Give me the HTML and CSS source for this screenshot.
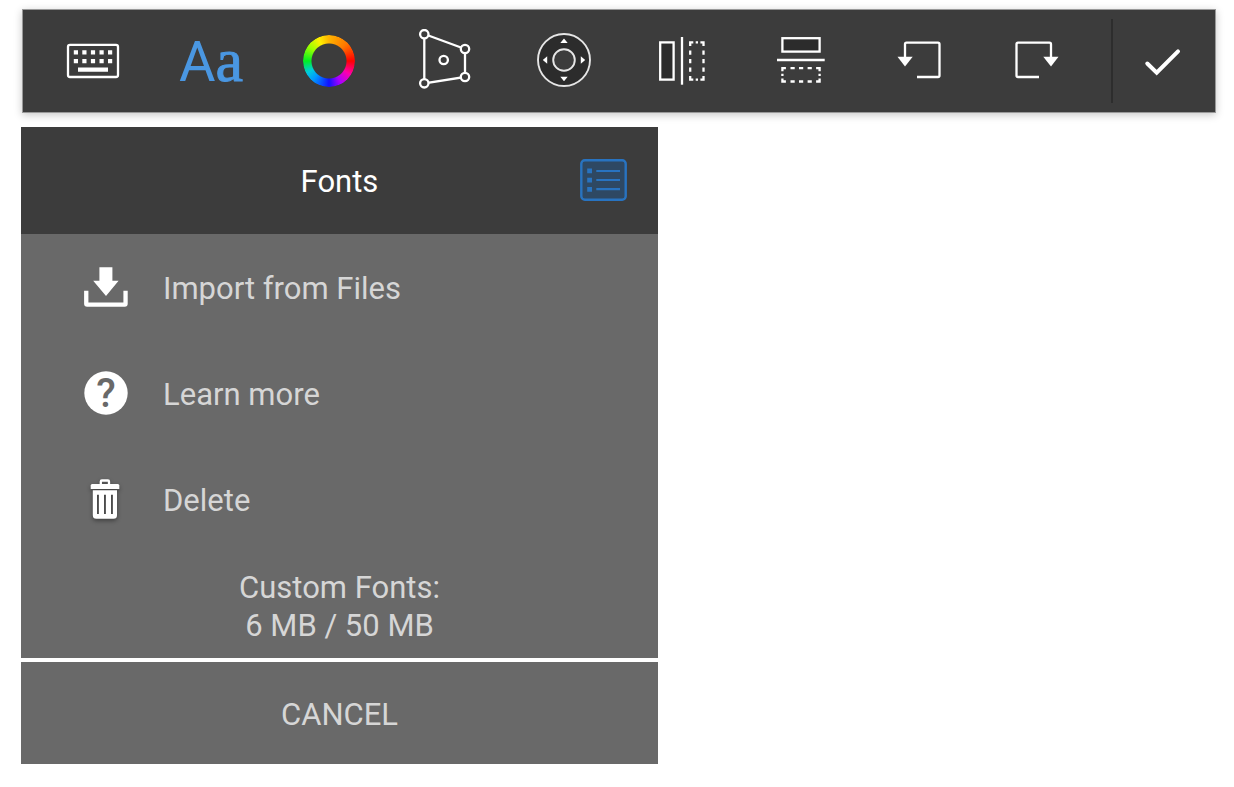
FILE: index.html
```
<!DOCTYPE html>
<html lang="en">

<head>
    <meta charset="UTF-8">
    <meta name="viewport" content="width=device-width, initial-scale=1.0">
    <title>Fonts</title>
    <link rel="stylesheet" href="styles.css">
</head>

<body>
    <header class="toolbar">
        <div class="tools">
            <button class="tool" type="button" aria-label="Keyboard">
                <svg class="icon" viewBox="0 0 64 64">
                    <rect class="line" x="7" y="15.8" width="50" height="32.2" rx="2" />
                    <path class="solid" d="M12.8 21.3h4.2v4.3h-4.2zM21.3 21.3h4.2v4.3h-4.2zM29.9 21.3h4.2v4.3h-4.2zM38.5 21.3h4.2v4.3h-4.2zM47 21.3h4.2v4.3h-4.2zM12.8 30h4.2v4.3h-4.2zM21.3 30h4.2v4.3h-4.2zM29.9 30h4.2v4.3h-4.2zM38.5 30h4.2v4.3h-4.2zM47 30h4.2v4.3h-4.2zM17 38.5h30v4.2h-30z" />
                </svg>
            </button>
            <button class="tool tool-font" type="button" aria-label="Font"><span>A</span><span class="serif">a</span></button>
            <button class="tool" type="button" aria-label="Color"><span class="wheel"></span></button>
            <button class="tool" type="button" aria-label="Perspective">
                <svg class="icon" viewBox="0 0 64 64">
                    <path class="line" d="M9.3 5L50 20V48L9.3 54.3z" />
                    <g class="line handle">
                        <circle cx="9.3" cy="5.2" r="4.2" />
                        <circle cx="50" cy="20" r="4.2" />
                        <circle cx="50" cy="48" r="4.2" />
                        <circle cx="9.3" cy="54.3" r="4.2" />
                        <circle cx="28.7" cy="31" r="4.2" />
                    </g>
                </svg>
            </button>
            <button class="tool" type="button" aria-label="Move">
                <svg class="icon" viewBox="0 0 64 64">
                    <circle class="line thin dark" cx="31" cy="31" r="26" />
                    <circle class="line thin handle" cx="31" cy="31" r="10.8" />
                    <path class="solid" d="M31 9.5l3.7 4.5h-7.4zM31 52.3l3.7-4.5h-7.4zM9.8 31l4.4-3.7v7.4zM52.2 31l-4.4-3.7v7.4z" />
                </svg>
            </button>
            <button class="tool" type="button" aria-label="Flip horizontal">
                <svg class="icon" viewBox="0 0 64 64">
                    <g id="flip">
                        <rect class="line dark" x="9.2" y="13.4" width="13.4" height="37.2" />
                        <path class="line" d="M31 8v47.7" />
                        <path class="line" d="M42.3 13.4h-3.1v3.5M49.4 13.4h3.1v3.5M42.3 50.6h-3.1v-3.5M49.4 50.6h3.1v-3.5M44.7 13.4H47M44.7 50.6H47M39.2 21.5v4.2M39.2 30v4.2M39.2 38.6v4.2M52.5 21.5v4.2M52.5 30v4.2M52.5 38.6v4.2" />
                    </g>
                </svg>
            </button>
            <button class="tool" type="button" aria-label="Flip vertical">
                <svg class="icon" viewBox="0 0 64 64">
                    <use href="#flip" transform="matrix(0 1 1 0 0 0)" />
                </svg>
            </button>
            <button class="tool" type="button" aria-label="Rotate left">
                <svg class="icon" viewBox="0 0 64 64">
                    <g id="rotate">
                        <path class="line" d="M18 29V15.2q0-1.5 1.5-1.5H51q1.5 0 1.5 1.5v31.3q0 1.5-1.5 1.5H30" />
                        <path class="solid" d="M10.5 27.7h15.2L18 37.5z" />
                    </g>
                </svg>
            </button>
            <button class="tool" type="button" aria-label="Rotate right">
                <svg class="icon" viewBox="0 0 64 64">
                    <use href="#rotate" transform="matrix(-1 0 0 1 64 0)" />
                </svg>
            </button>
        </div>
        <button class="done" type="button" aria-label="Done">
            <svg class="icon" viewBox="0 0 64 64">
                <path class="line check" d="M15.3 34.5l9.4 9.2L46 22.3" />
            </svg>
        </button>
    </header>

    <main class="panel">
        <div class="panel-head">
            <h1 class="label">Fonts</h1>
            <button class="list-btn" type="button" aria-label="List">
                <svg viewBox="0 0 47 42">
                    <rect class="list-box" x="1.3" y="1.3" width="44.4" height="39.4" rx="3.5" />
                    <path class="list-line" d="M16.3 12H40M16.3 21H40M16.3 30.2H40" />
                    <path class="list-dot" d="M7.2 9.5h4.8v4.8H7.2zM7.2 18.7h4.8v4.8H7.2zM7.2 28h4.8v4.8H7.2z" />
                </svg>
            </button>
        </div>
        <ul class="menu">
            <li>
                <button class="item" type="button">
                    <svg class="icon" viewBox="0 0 64 64">
                        <path class="solid" d="M25.4 12.3h13v13.4h6.2L32 41 19.2 25.7h6.2zM10.1 35.8h4.3v11.6h35V35.8h4.3v13q0 3-3 3H13.1q-3 0-3-3z" />
                    </svg>
                    <span class="label">Import from Files</span>
                </button>
            </li>
            <li>
                <button class="item" type="button">
                    <svg class="icon" viewBox="0 0 64 64" aria-hidden="true">
                        <circle class="solid" cx="32" cy="32" r="21.7" />
                        <text class="mark" x="32" y="46">?</text>
                    </svg>
                    <span class="label">Learn more</span>
                </button>
            </li>
            <li>
                <button class="item" type="button">
                    <svg class="icon trash" viewBox="0 0 64 64">
                        <path class="line" d="M26.8 18v-3.4q0-1.1 1.1-1.1h6q1.1 0 1.1 1.1V18" />
                        <path class="solid" d="M18.2 17h25.6q1.5 0 1.5 1.5V22H16.7v-3.5q0-1.5 1.5-1.5z" />
                        <path class="solid" fill-rule="evenodd" d="M18.8 23.2H43v25q0 3.5-3.5 3.5H22.3q-3.5 0-3.5-3.5zM23 27.8V47h1.9V27.8zM30 27.8V47h1.9V27.8zM37 27.8V47h1.9V27.8z" />
                    </svg>
                    <span class="label">Delete</span>
                </button>
            </li>
        </ul>
        <p class="storage">Custom Fonts:<br>6 MB / 50 MB</p>
        <button class="cancel" type="button"><span class="label">CANCEL</span></button>
    </main>
</body>

</html>
```
FILE: styles.css
```
* {
    margin: 0;
    padding: 0;
    box-sizing: border-box;
}

body {
    padding: 10px 19px 23px 21px;
    background-color: #fff;
    font-family: Roboto, "Liberation Sans", sans-serif;
    font-size: 31px;
    line-height: 38px;
    color: #d6d6d6;
}

button {
    border: 0;
    background: none;
    font: inherit;
    color: inherit;
    cursor: pointer;
}

.icon {
    display: block;
    flex: none;
    width: 64px;
    height: 64px;
}

.label {
    display: block;
    padding-top: 3px;
}

.line {
    fill: none;
    stroke: #fff;
    stroke-width: 2.3;
}

.thin {
    stroke: #e6e6e6;
    stroke-width: 1.9;
}

.solid {
    fill: #fff;
}

.dark {
    fill: #2c2c2c;
}

.handle {
    fill: #3c3c3c;
}

.check {
    stroke-width: 4;
    stroke-linecap: round;
}

/* toolbar */
.toolbar {
    display: flex;
    align-items: center;
    height: 102px;
    margin-left: 2px;
    background-color: #3c3c3c;
    box-shadow: 0 0 0 1px #999, 0 2px 8px 1px rgba(0, 0, 0, .22);
}

.tools {
    flex: 1;
    display: grid;
    grid-template-columns: repeat(9, 1fr);
    padding: 0 15px 0 11px;
}

.tool,
.done {
    display: flex;
    align-items: center;
    justify-content: center;
    height: 84px;
}

.done {
    width: 104px;
    border-left: 2px solid #2d2d2d;
}

.tool-font {
    align-items: baseline;
    font-size: 56px;
    line-height: 82px;
    color: #4a97e2;
}

.serif {
    font-family: "Liberation Serif", serif;
    font-size: 62px;
    -webkit-text-stroke: 1px #4a97e2;
}

.wheel {
    width: 52px;
    height: 52px;
    border-radius: 50%;
    background: conic-gradient(#ffb400, #ff7800 45deg, #f00 90deg, #f0a 122deg, #a0f 152deg, #11f 180deg, #09f 220deg, #0cd 242deg, #0e2 270deg, #9f0 305deg, #fe0 335deg, #ffb400);
    mask: radial-gradient(circle, transparent 17px, #000 18px);
}

/* fonts menu */
.panel {
    max-width: 637px;
    margin-top: 15px;
}

.panel-head {
    display: grid;
    grid-template-columns: 1fr auto 1fr;
    align-items: center;
    height: 107px;
    padding: 0 31px 1px;
    background-color: #3c3c3c;
}

.panel-head h1 {
    grid-column: 2;
    font-size: 31px;
    font-weight: 400;
    color: #fff;
}

.list-btn {
    justify-self: end;
    width: 47px;
    height: 42px;
}

.list-btn svg {
    display: block;
}

.list-box {
    fill: #2e4863;
    stroke: #2873c0;
    stroke-width: 2.4;
}

.list-line {
    stroke: #2873c0;
    stroke-width: 2.2;
}

.list-dot {
    fill: #2873c0;
}

.menu {
    list-style: none;
    background-color: #696969;
}

.item {
    display: flex;
    align-items: center;
    gap: 25px;
    width: 100%;
    height: 106px;
    padding-left: 53px;
    text-align: left;
}

.mark {
    fill: #696969;
    font-size: 40px;
    font-weight: 500;
    text-anchor: middle;
}

.trash {
    filter: drop-shadow(0 2px 2px rgba(0, 0, 0, .4));
}

.storage {
    padding: 17px 0 13px;
    background-color: #696969;
    text-align: center;
}

.cancel {
    display: block;
    width: 100%;
    height: 102px;
    margin-top: 4px;
    background-color: #696969;
}
```
